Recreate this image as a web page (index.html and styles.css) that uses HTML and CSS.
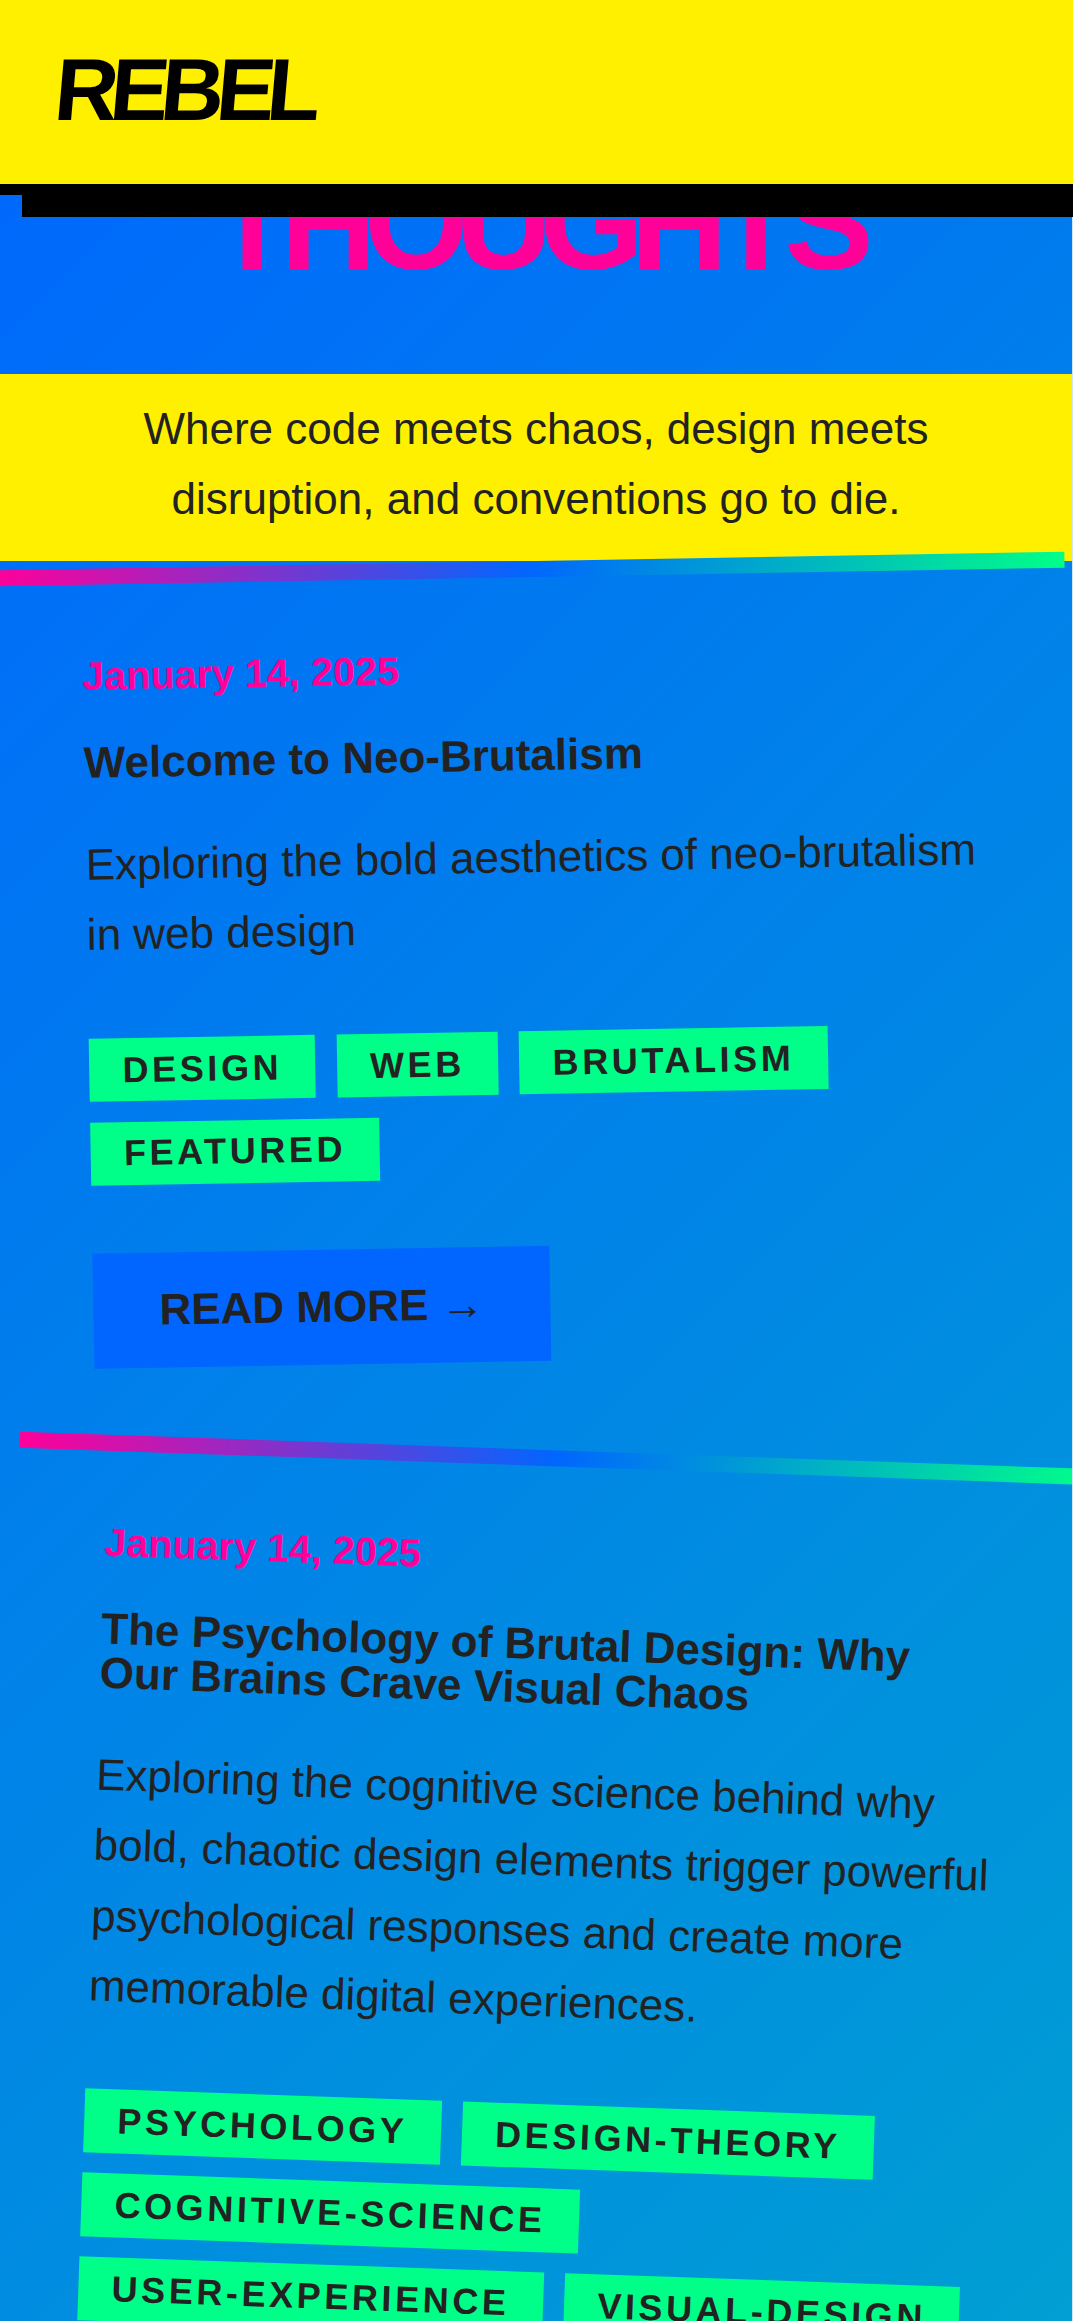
FILE: index.html
```html
<!DOCTYPE html>
<html lang="en">
<head>
    <meta charset="UTF-8">
    <meta name="viewport" content="width=device-width, initial-scale=1.0">
    <title>Rebel Thoughts</title>
    <link rel="stylesheet" href="styles.css">
</head>
<body>

    <header class="site-header">
        <a class="logo" href="#">REBEL</a>
    </header>

    <main class="page">
        <section class="hero">
            <h1>THOUGHTS</h1>
        </section>

        <p class="tagline">Where code meets chaos, design meets disruption, and conventions go to die.</p>

        <article class="post post-left">
            <div class="post-date">January 14, 2025</div>
            <h2>Welcome to Neo-Brutalism</h2>
            <p class="post-text">Exploring the bold aesthetics of neo-brutalism in web design</p>
            <div class="tags">
                <span class="tag">Design</span>
                <span class="tag">Web</span>
                <span class="tag">Brutalism</span>
                <span class="tag">Featured</span>
            </div>
            <a class="read-more" href="#">READ MORE →</a>
        </article>

        <article class="post post-right">
            <div class="post-date">January 14, 2025</div>
            <h2>The Psychology of Brutal Design: Why Our Brains Crave Visual Chaos</h2>
            <p class="post-text">Exploring the cognitive science behind why bold, chaotic design elements trigger powerful psychological responses and create more memorable digital experiences.</p>
            <div class="tags">
                <span class="tag">Psychology</span>
                <span class="tag">Design-Theory</span>
                <span class="tag">Cognitive-Science</span>
                <span class="tag">User-Experience</span>
                <span class="tag">Visual-Design</span>
            </div>
            <a class="read-more" href="#">READ MORE →</a>
        </article>
    </main>

</body>
</html>
```

FILE: styles.css
```css
* {
    box-sizing: border-box;
}
html,
body {
    height: 100%;
    overflow: hidden;
}
html {
    background: #cfe3ff;
}
body {
    margin: 0;
    font-family: "Liberation Sans", Arial, sans-serif;
    font-size: 44px;
    line-height: 1.6;
    color: #222;
}
.site-header {
    position: fixed;
    top: 0;
    left: 0;
    width: 100%;
    height: 195px;
    padding: 40px 55px 0;
    background: #fff000;
    border-bottom: 11px solid #000;
    box-shadow: 22px 22px 0 #000;
    z-index: 10;
}
.logo {
    display: inline-block;
    font-size: 88px;
    line-height: 100px;
    font-weight: bold;
    letter-spacing: -8px;
    color: #000;
    text-decoration: none;
    transform: skewX(-5deg);
}
.page {
    width: 1072px;
    height: 100%;
    overflow: hidden;
    background: linear-gradient(135deg, #0066ff, #00ff88) 0 0 / 1073px 8100px no-repeat;
}
.hero {
    height: 374px;
    padding-top: 156px;
    text-align: center;
}
h1 {
    margin: 0;
    font-size: 134px;
    line-height: 1;
    letter-spacing: -12.8px;
    color: #ff0099;
}
.tagline {
    margin: 0;
    padding: 20px 100px 26px;
    background: #fff000;
    text-align: center;
}
.post {
    position: relative;
    padding: 76px 80px 71.7px 88px;
    margin-bottom: 18px;
}
.post::before {
    content: "";
    position: absolute;
    top: 0;
    left: 0;
    right: 0;
    height: 16px;
    background: linear-gradient(90deg, #ff0099, #0066ff, #00ff88);
}
.post-left {
    transform: rotate(-1deg);
}
.post-right {
    transform: rotate(2deg);
}
.post-date {
    margin-bottom: 32.5px;
    font-size: 39.6px;
    font-weight: bold;
    color: #ff0099;
}
h2 {
    max-width: 880px;
    margin: 0 0 45px;
    font-size: 44px;
    line-height: 1;
}
.post-text {
    margin: 0 0 68px;
}
.tags {
    display: flex;
    flex-wrap: wrap;
    gap: 20.6px 21.3px;
    margin-bottom: 67.8px;
}
.tag {
    padding: 2.9px 33.3px;
    background: #00ff88;
    font-size: 36px;
    font-weight: bold;
    letter-spacing: 3.6px;
    text-transform: uppercase;
}
.read-more {
    display: inline-block;
    padding: 22.3px 66px;
    background: #0066ff;
    font-weight: bold;
    color: #222;
    text-decoration: none;
}
```
